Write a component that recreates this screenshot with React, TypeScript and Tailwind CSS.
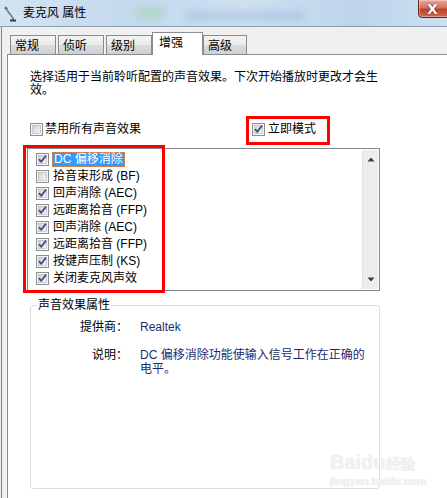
import React from "react";

function CheckBox({ checked }: { checked: boolean }) {
  return (
    <svg width="13" height="13" viewBox="0 0 13 13" className="shrink-0">
      <defs>
        <linearGradient id="cbg" x1="0" y1="0" x2="1" y2="1">
          <stop offset="0" stopColor="#cfcfcf" />
          <stop offset="1" stopColor="#f7f7f7" />
        </linearGradient>
      </defs>
      <rect x="0.5" y="0.5" width="12" height="12" fill="#f4f4f4" stroke="#8e8f8f" />
      <rect x="2.5" y="2.5" width="8" height="8" fill="url(#cbg)" stroke="#b4b4b4" strokeWidth="0.6" />
      {checked && (
        <path d="M3 6.2 L5.3 8.8 L10 2.6" fill="none" stroke="#3d4f93" strokeWidth="1.8" strokeLinejoin="round" />
      )}
    </svg>
  );
}

const effects: { label: string; checked: boolean }[] = [
  { label: "DC 偏移消除", checked: true },
  { label: "拾音束形成 (BF)", checked: false },
  { label: "回声消除 (AEC)", checked: true },
  { label: "远距离拾音 (FFP)", checked: true },
  { label: "回声消除 (AEC)", checked: true },
  { label: "远距离拾音 (FFP)", checked: true },
  { label: "按键声压制 (KS)", checked: true },
  { label: "关闭麦克风声效", checked: true },
];

function Tab({ label, active, className }: { label: string; active?: boolean; className: string }) {
  if (active) {
    return (
      <div
        className={`relative z-10 -mb-[1px] h-[23px] border border-b-0 border-[#898c95] bg-white pl-[6px] pt-[2px] text-[12px] leading-[16px] ${className}`}
      >
        {label}
      </div>
    );
  }
  return (
    <div
      className={`h-[19px] border border-b-0 border-[#898c95] bg-[linear-gradient(#f3f3f3,#ebebeb_50%,#dddddd_50%,#cfcfcf)] pl-[4px] pt-[3px] text-[12px] leading-[14px] ${className}`}
    >
      {label}
    </div>
  );
}

export default function App() {
  return (
    <div className="flex h-[498px] w-[447px] flex-col overflow-hidden bg-[#f0f0f0] font-['Liberation_Sans','Noto_Sans_CJK_SC',sans-serif] text-[12px] text-black">
      {/* title bar */}
      <div className="relative flex h-[27px] shrink-0 items-center border-b border-[#8a9cb2] bg-[linear-gradient(90deg,#d3e3f2,#c4d9ee_30%,#cfe0f1_55%,#bed4ea_80%,#cde0f2)]">
        <div className="absolute left-[135px] top-[8px] h-[10px] w-[30px] rounded-full bg-[#9fd0a8] opacity-60 blur-[4px]" />
        <div className="absolute left-[185px] top-[12px] h-[8px] w-[120px] rounded-full bg-[#8fb0d6] opacity-50 blur-[4px]" />
        <svg width="16" height="18" viewBox="0 0 16 18" className="ml-[2px] mt-[2px]">
          <path d="M2 3 L4 1.5 L6 3.5 L4 5 Z" fill="#6a6a6a" />
          <path d="M4.5 4.5 L11 13" stroke="#7a7a7a" strokeWidth="1.6" />
          <path d="M8 15.5 L14 15.5" stroke="#3a3a3a" strokeWidth="2" />
          <path d="M11 13 L11 15" stroke="#555" strokeWidth="1.4" />
        </svg>
        <span className="ml-[5px] text-[12px] leading-[14px]">麦克风 属性</span>
        <div className="absolute right-[-6px] top-[-1px] flex h-[19px] w-[35px] items-center justify-center rounded-bl-[4px] border border-[#6a241a] bg-[linear-gradient(#e9a898,#d8705e_45%,#c0402c_55%,#cf6a52)] pr-[6px] shadow-[inset_0_0_0_1px_rgba(255,255,255,0.35)]">
          <span className="font-['DejaVu_Sans',sans-serif] text-[14px] font-bold leading-[14px] text-white [text-shadow:0_0_1px_#4a120c,0_0_1px_#4a120c]">
            X
          </span>
        </div>
      </div>

      {/* body */}
      <div className="flex flex-1 flex-row">
        <div className="w-[1px] bg-[#e6edf5]" />
        <div className="w-[1px] bg-[#6f87a6]" />
        <div className="w-[5px]" />
        <div className="flex flex-1 flex-col">
          {/* tabs */}
          <div className="flex h-[27px] shrink-0 items-end">
            <Tab label="常规" className="ml-[3px] w-[46px]" />
            <Tab label="侦听" className="ml-[2px] w-[46px]" />
            <Tab label="级别" className="ml-[2px] w-[46px]" />
            <Tab label="增强" active className="w-[51px]" />
            <Tab label="高级" className="w-[44px]" />
          </div>

          {/* tab page */}
          <div className="relative flex flex-1 flex-col border-l border-t border-[#898c95] bg-white">
            <p className="ml-[22px] mt-[16px] w-[352px] leading-[13px]">
              选择适用于当前聆听配置的声音效果。下次开始播放时更改才会生
              <br />
              效。
            </p>

            <div className="mt-[26px] flex h-[13px] items-center">
              <div className="ml-[22px] flex items-center gap-[2px]">
                <CheckBox checked={false} />
                <span className="leading-[13px]">禁用所有声音效果</span>
              </div>
              <div className="ml-[111px] flex items-center gap-[3px]">
                <CheckBox checked />
                <span className="leading-[13px]">立即模式</span>
              </div>
            </div>

            {/* list box */}
            <div className="ml-[19px] mt-[12px] flex h-[143px] w-[353px] border border-[#828790] bg-white">
              <div className="flex flex-1 flex-col pl-[8px] pt-[2px]">
                {effects.map((e, i) => (
                  <div key={i} className="flex h-[17px] items-center">
                    <CheckBox checked={e.checked} />
                    {i === 0 ? (
                      <span className="ml-[3px] h-[15px] bg-[#3399ff] px-[2px] leading-[14px] text-white outline-1 -outline-offset-1 outline-dotted outline-[#d08a50]">
                        {e.label}
                      </span>
                    ) : (
                      <span className="ml-[4px] leading-[15px]">{e.label}</span>
                    )}
                  </div>
                ))}
              </div>
              <div className="my-[1px] mr-[1px] flex w-[16px] flex-col items-center justify-between border-l border-[#e2e2e2] bg-[#ededed] py-[7px]">
                <svg width="8" height="5" viewBox="0 0 8 5">
                  <path d="M0.5 4.5 L4 0.5 L7.5 4.5 Z" fill="#3c3c3c" />
                </svg>
                <svg width="8" height="5" viewBox="0 0 8 5">
                  <path d="M0.5 0.5 L4 4.5 L7.5 0.5 Z" fill="#3c3c3c" />
                </svg>
              </div>
            </div>

            {/* group box */}
            <fieldset className="ml-[22px] mt-[7px] h-[191px] w-[350px] rounded-[3px] border border-[#d5dfe5]">
              <legend className="ml-[6px] px-[1px] leading-[14px]">声音效果属性</legend>
              <div className="mt-[8px] flex leading-[14px]">
                <span className="w-[97px] text-right">提供商：</span>
                <span className="ml-[12px] text-[#1c2b6b]">Realtek</span>
              </div>
              <div className="mt-[14px] flex leading-[14px]">
                <span className="w-[97px] text-right">说明：</span>
                <span className="ml-[12px] text-[#1c2b6b]">
                  DC 偏移消除功能使输入信号工作在正确的
                  <br />
                  电平。
                </span>
              </div>
            </fieldset>

            {/* annotations */}
            <div className="absolute left-[238px] top-[61px] h-[29px] w-[84px] border-[3px] border-[#ff0000]" />
            <div className="absolute left-[15px] top-[90px] h-[148px] w-[142px] border-[3px] border-[#ff0000]" />

            {/* watermark */}
            <div className="absolute left-[322px] top-[396px] flex flex-col items-start text-[#f1f1f1]">
              <span className="font-['Liberation_Sans',sans-serif] text-[20px] font-bold leading-[22px] [text-shadow:0_0_1px_#e2e2e2]">
                Baidu<span className="text-[15px]">经验</span>
              </span>
              <span className="font-['Liberation_Sans',sans-serif] text-[11px] font-bold leading-[12px] [text-shadow:0_0_1px_#e2e2e2]">
                jingyan.baidu.com
              </span>
            </div>
          </div>
        </div>
      </div>
    </div>
  );
}
